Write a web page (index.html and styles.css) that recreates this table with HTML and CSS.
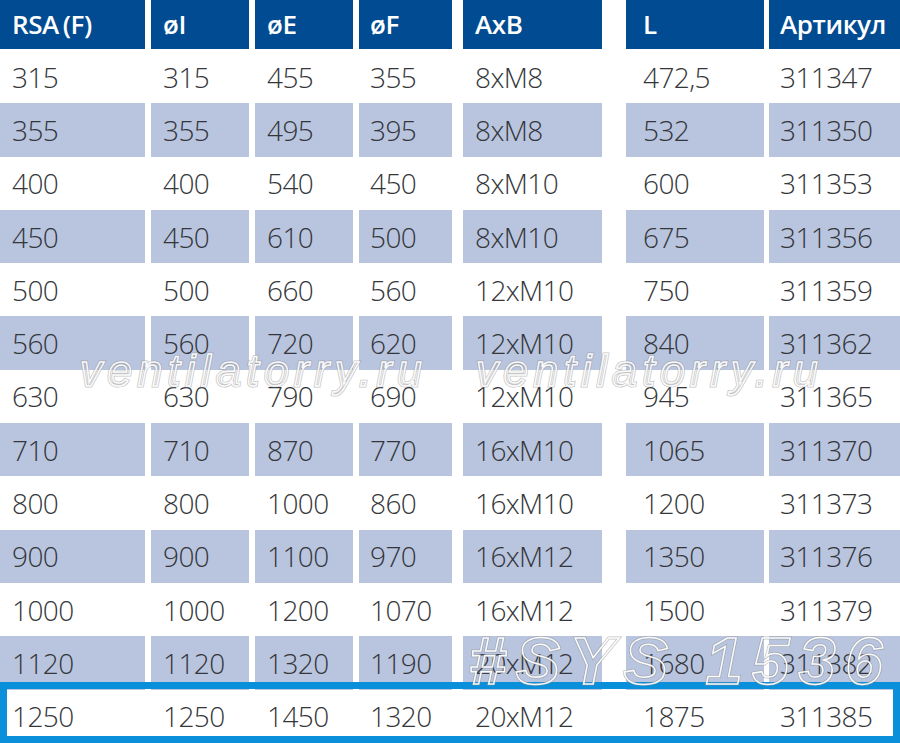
FILE: index.html
```html
<!DOCTYPE html>
<html lang="ru">
<head>
<meta charset="utf-8">
<title>RSA (F)</title>
<link rel="stylesheet" href="styles.css">
</head>
<body>
<div class="page">
  <div class="table">
    <div class="row head">
      <div class="cell c1">RSA (F)</div>
      <div class="cell c2">øI</div>
      <div class="cell c3">øE</div>
      <div class="cell c4">øF</div>
      <div class="cell c5">AxB</div>
      <div class="cell c6">L</div>
      <div class="cell c7">Артикул</div>
    </div>
    <div class="row"><div class="cell c1">315</div><div class="cell c2">315</div><div class="cell c3">455</div><div class="cell c4">355</div><div class="cell c5">8xM8</div><div class="cell c6">472,5</div><div class="cell c7">311347</div></div>
    <div class="row alt"><div class="cell c1">355</div><div class="cell c2">355</div><div class="cell c3">495</div><div class="cell c4">395</div><div class="cell c5">8xM8</div><div class="cell c6">532</div><div class="cell c7">311350</div></div>
    <div class="row"><div class="cell c1">400</div><div class="cell c2">400</div><div class="cell c3">540</div><div class="cell c4">450</div><div class="cell c5">8xM10</div><div class="cell c6">600</div><div class="cell c7">311353</div></div>
    <div class="row alt"><div class="cell c1">450</div><div class="cell c2">450</div><div class="cell c3">610</div><div class="cell c4">500</div><div class="cell c5">8xM10</div><div class="cell c6">675</div><div class="cell c7">311356</div></div>
    <div class="row"><div class="cell c1">500</div><div class="cell c2">500</div><div class="cell c3">660</div><div class="cell c4">560</div><div class="cell c5">12xM10</div><div class="cell c6">750</div><div class="cell c7">311359</div></div>
    <div class="row alt"><div class="cell c1">560</div><div class="cell c2">560</div><div class="cell c3">720</div><div class="cell c4">620</div><div class="cell c5">12xM10</div><div class="cell c6">840</div><div class="cell c7">311362</div></div>
    <div class="row"><div class="cell c1">630</div><div class="cell c2">630</div><div class="cell c3">790</div><div class="cell c4">690</div><div class="cell c5">12xM10</div><div class="cell c6">945</div><div class="cell c7">311365</div></div>
    <div class="row alt"><div class="cell c1">710</div><div class="cell c2">710</div><div class="cell c3">870</div><div class="cell c4">770</div><div class="cell c5">16xM10</div><div class="cell c6">1065</div><div class="cell c7">311370</div></div>
    <div class="row"><div class="cell c1">800</div><div class="cell c2">800</div><div class="cell c3">1000</div><div class="cell c4">860</div><div class="cell c5">16xM10</div><div class="cell c6">1200</div><div class="cell c7">311373</div></div>
    <div class="row alt"><div class="cell c1">900</div><div class="cell c2">900</div><div class="cell c3">1100</div><div class="cell c4">970</div><div class="cell c5">16xM12</div><div class="cell c6">1350</div><div class="cell c7">311376</div></div>
    <div class="row"><div class="cell c1">1000</div><div class="cell c2">1000</div><div class="cell c3">1200</div><div class="cell c4">1070</div><div class="cell c5">16xM12</div><div class="cell c6">1500</div><div class="cell c7">311379</div></div>
    <div class="row alt"><div class="cell c1">1120</div><div class="cell c2">1120</div><div class="cell c3">1320</div><div class="cell c4">1190</div><div class="cell c5">20xM12</div><div class="cell c6">1680</div><div class="cell c7">311382</div></div>
    <div class="row"><div class="cell c1">1250</div><div class="cell c2">1250</div><div class="cell c3">1450</div><div class="cell c4">1320</div><div class="cell c5">20xM12</div><div class="cell c6">1875</div><div class="cell c7">311385</div></div>
  </div>

  <div class="highlight"></div>
  <div class="wm wm-site wm-a" data-text="ventilatorry.ru">ventilatorry.ru</div>
  <div class="wm wm-site wm-b" data-text="ventilatorry.ru">ventilatorry.ru</div>
  <div class="wm wm-sys" data-text="#SYS 1536">#SYS 1536</div>
</div>
</body>
</html>
```

FILE: styles.css
```css
html, body {
  margin: 0;
  padding: 0;
  background: #ffffff;
}

.page {
  position: relative;
  width: 900px;
  height: 743px;
  overflow: hidden;
  font-family: "Open Sans", "Noto Sans", sans-serif;
}

.table {
  display: flex;
  flex-direction: column;
}

.row {
  display: flex;
  height: 53.3px;
}

.cell {
  display: flex;
  align-items: center;
  box-sizing: border-box;
  padding-left: 12px;
  font-size: 28px;
  font-weight: 300;
  letter-spacing: -0.6px;
  color: #34363a;
  white-space: nowrap;
}

.c1 { width: 145px; }
.c2 { width: 98px;  margin-left: 6px; }
.c3 { width: 98px;  margin-left: 6px; }
.c4 { width: 93px;  margin-left: 6px; padding-left: 11px; }
.c5 { width: 139px; margin-left: 11px; }
.c6 { width: 138px; margin-left: 24px; padding-left: 17px; }
.c7 { width: 131px; margin-left: 5px; padding-left: 11px; }

.row.alt .cell {
  background: #b9c5df;
}

.row.head {
  height: 49px;
  margin-bottom: 1px;
}

.row.head .cell {
  background: #004b91;
  color: #ffffff;
  font-weight: 600;
  font-size: 26px;
  padding-bottom: 1px;
  letter-spacing: -0.4px;
  word-spacing: -2.5px;
}

.highlight {
  position: absolute;
  left: 0;
  top: 682px;
  width: 900px;
  height: 61px;
  box-sizing: border-box;
  border: 7px solid #0a8fdb;
}

.wm {
  position: absolute;
  white-space: nowrap;
  font-family: "Liberation Sans", Arial, sans-serif;
  font-style: italic;
  color: transparent;
  -webkit-text-stroke: 3px rgba(140, 140, 140, 0.5);
  line-height: 1;
}

.wm::after {
  content: attr(data-text);
  position: absolute;
  left: 0;
  top: 0;
  -webkit-text-stroke: 1.5px rgba(255, 255, 255, 0.95);
}

.wm-site {
  top: 349px;
  font-size: 44px;
  letter-spacing: 5.6px;
}

.wm-a { left: 80px; }
.wm-b { left: 476px; }

.wm-sys {
  left: 469px;
  top: 627px;
  font-size: 67px;
  font-weight: 700;
  letter-spacing: 9.3px;
}
```
